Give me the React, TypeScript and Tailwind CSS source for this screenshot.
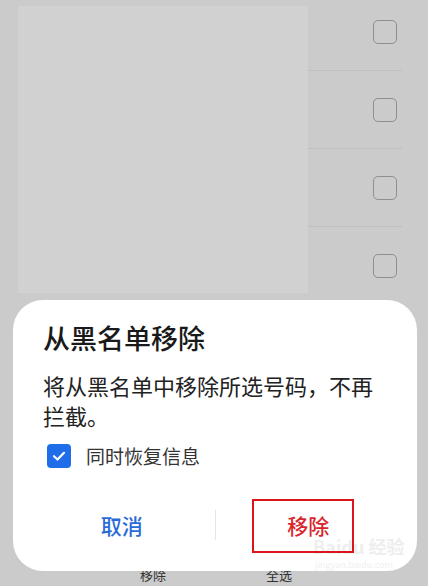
import React from "react";

const font = { fontFamily: '"Noto Sans CJK SC", "Noto Sans", sans-serif' };

function EmptyBox() {
  return <div className="w-[24px] h-[24px] rounded-[5px] border-[1.5px] border-[#8f8f8f]" />;
}

export default function App() {
  const rows = [0, 1, 2, 3];
  return (
    <div className="relative w-[428px] h-[586px] overflow-hidden bg-[#cbcbcb]" style={font}>
      <div className="flex">
        <div className="ml-[18px] mt-[6px] w-[290px] h-[287px] bg-[#d2d1d2]" />
        <div className="flex flex-col mt-[-7px] w-[94px]">
          {rows.map((r) => (
            <div
              key={r}
              className={
                "h-[78px] flex items-center justify-end pr-[5px] " +
                (r < 3 ? "border-b border-[#bfbfbf]" : "")
              }
            >
              <EmptyBox />
            </div>
          ))}
        </div>
      </div>

      <div className="absolute left-0 right-0 top-[566px] flex text-[13px] leading-[18px] text-[#333]">
        <div className="ml-[140px]">移除</div>
        <div className="ml-[100px]">全选</div>
      </div>

      <div className="absolute left-[13px] top-[300px] w-[404px] h-[271px] rounded-[30px] bg-white">
        <div className="pl-[30px] pr-[30px] pt-[20px]">
          <div className="text-[27px] leading-[36px] font-medium text-[#1a1a1a]">从黑名单移除</div>
          <div className="mt-[14px] text-[22px] leading-[30px] text-[#222]">
            将从黑名单中移除所选号码，不再拦截。
          </div>
          <div className="mt-[13px] ml-[4px] flex items-center gap-[15px]">
            <div className="w-[24px] h-[24px] rounded-[4px] bg-[#1f6de8] flex items-center justify-center">
              <svg width="16" height="16" viewBox="0 0 16 16" fill="none">
                <path d="M3 8.2 L6.5 11.5 L13 4.8" stroke="white" strokeWidth="2.2" strokeLinecap="round" strokeLinejoin="round" />
              </svg>
            </div>
            <div className="text-[19px] leading-[26px] text-[#333]">同时恢复信息</div>
          </div>
        </div>
        <div className="mt-[31px] px-[16px] flex items-center h-[50px]">
          <div className="flex-1 flex justify-center text-[21px] leading-[28px] font-medium text-[#2a6bd8]">取消</div>
          <div className="w-px h-[30px] bg-[#e6e6e6]" />
          <div className="flex-1 flex justify-center text-[21px] leading-[28px] font-medium text-[#d9252b]">移除</div>
        </div>
        <div className="absolute left-[300px] top-[237px] text-[18px] leading-[19px] font-bold text-[#eeeeee]">Baidu 经验</div>
        <div className="absolute left-[302px] top-[260px] text-[9px] leading-[10px] text-[#f0f0f0]">jingyan.baidu.com</div>
      </div>

      <div className="absolute left-[252px] top-[499px] w-[102px] h-[54px] border-2 border-[#d8161c]" />
    </div>
  );
}
